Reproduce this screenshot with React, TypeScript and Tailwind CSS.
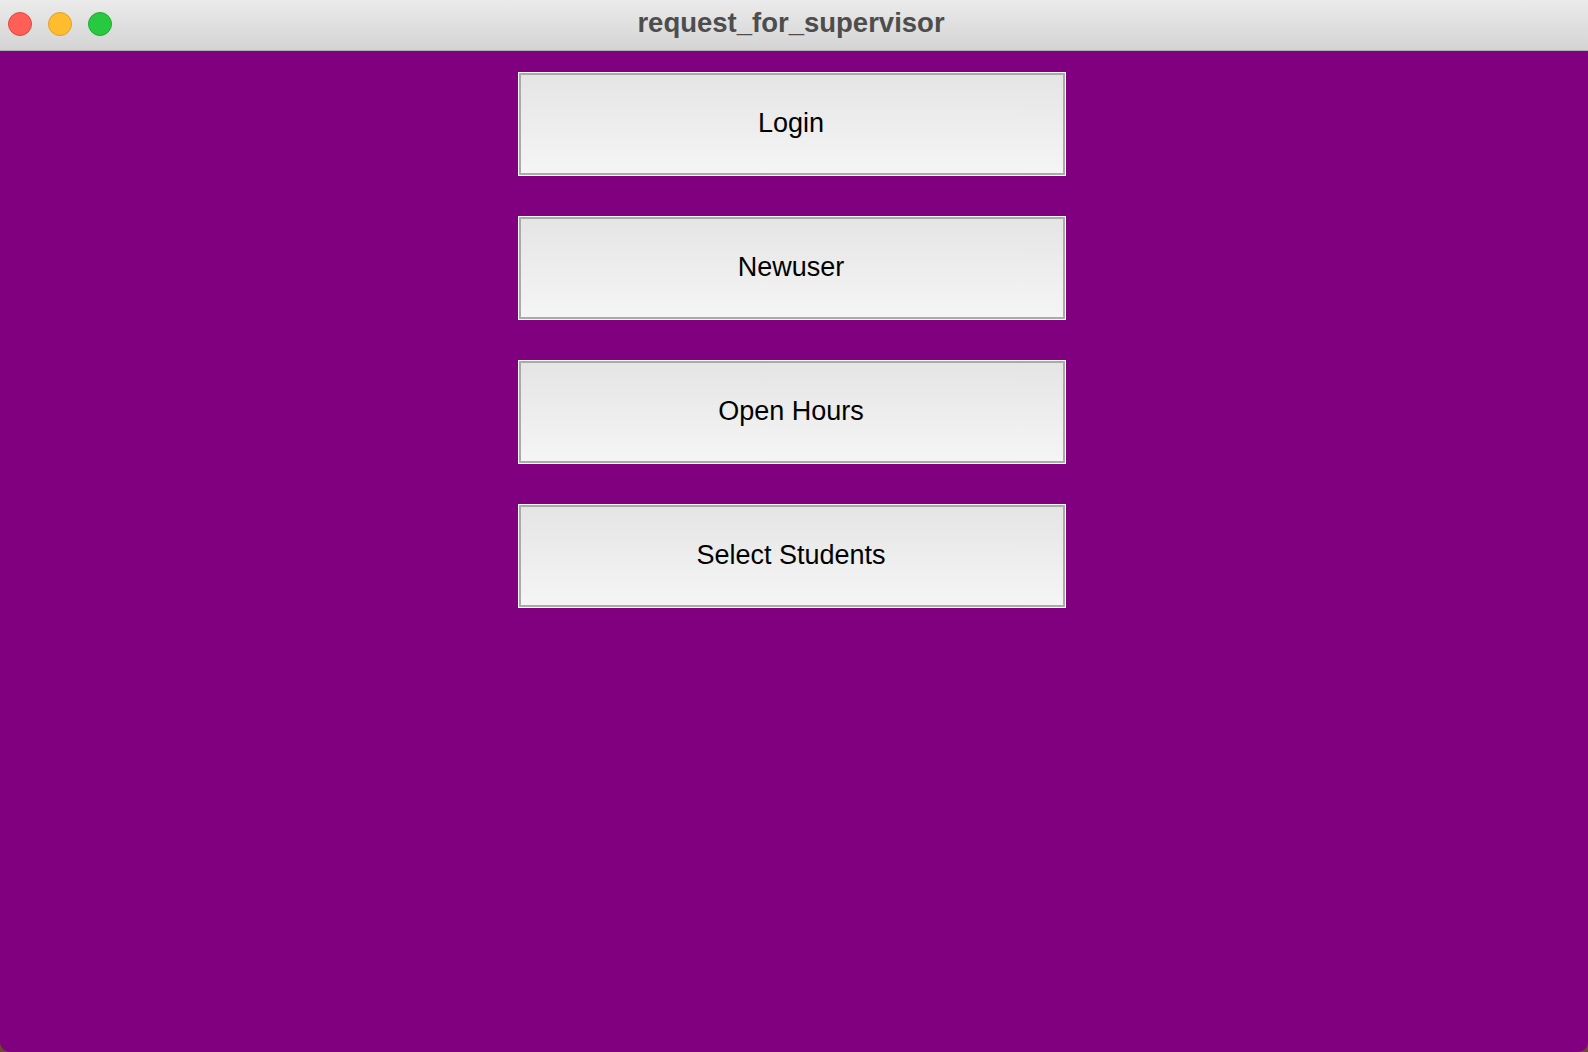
const buttons = ["Login", "Newuser", "Open Hours", "Select Students"];

export default function App() {
  return (
    <div className="w-[1588px] h-[1052px] bg-[#6b4a2e] overflow-hidden">
      <div className="w-full h-full flex flex-col rounded-b-[10px] overflow-hidden bg-[#800080]">
        {/* title bar */}
        <div className="relative h-[51px] shrink-0 flex items-center justify-center bg-gradient-to-b from-[#ebebeb] to-[#d4d4d4] border-b border-[#b1b1b1]">
          <div className="absolute left-[8px] top-[12px] flex gap-[16px]">
            <span className="w-[24px] h-[24px] rounded-full bg-[#fe5f57] border border-[#e2463f]" />
            <span className="w-[24px] h-[24px] rounded-full bg-[#febc2e] border border-[#e0a027]" />
            <span className="w-[24px] h-[24px] rounded-full bg-[#28c840] border border-[#1eab33]" />
          </div>
          <span className="text-[27.5px] font-bold text-[#4d4d4d] font-['Liberation_Sans',Arial,sans-serif] leading-none -mt-[4px] -ml-[6px]">
            request_for_supervisor
          </span>
        </div>

        {/* content */}
        <div className="flex-1 pt-[21px] pl-[518px] flex flex-col gap-[40px]">
          {buttons.map((label) => (
            <div key={label} className="w-[548px] h-[104px] border border-white">
              <div className="w-full h-full border-2 border-[#aaaaaa] bg-gradient-to-b from-[#e5e5e5] to-[#f5f5f5] flex items-center justify-center">
                <span className="text-[27px] text-black font-['Liberation_Sans',Arial,sans-serif] leading-none -mt-[2px] -ml-[2px]">
                  {label}
                </span>
              </div>
            </div>
          ))}
        </div>
      </div>
    </div>
  );
}
